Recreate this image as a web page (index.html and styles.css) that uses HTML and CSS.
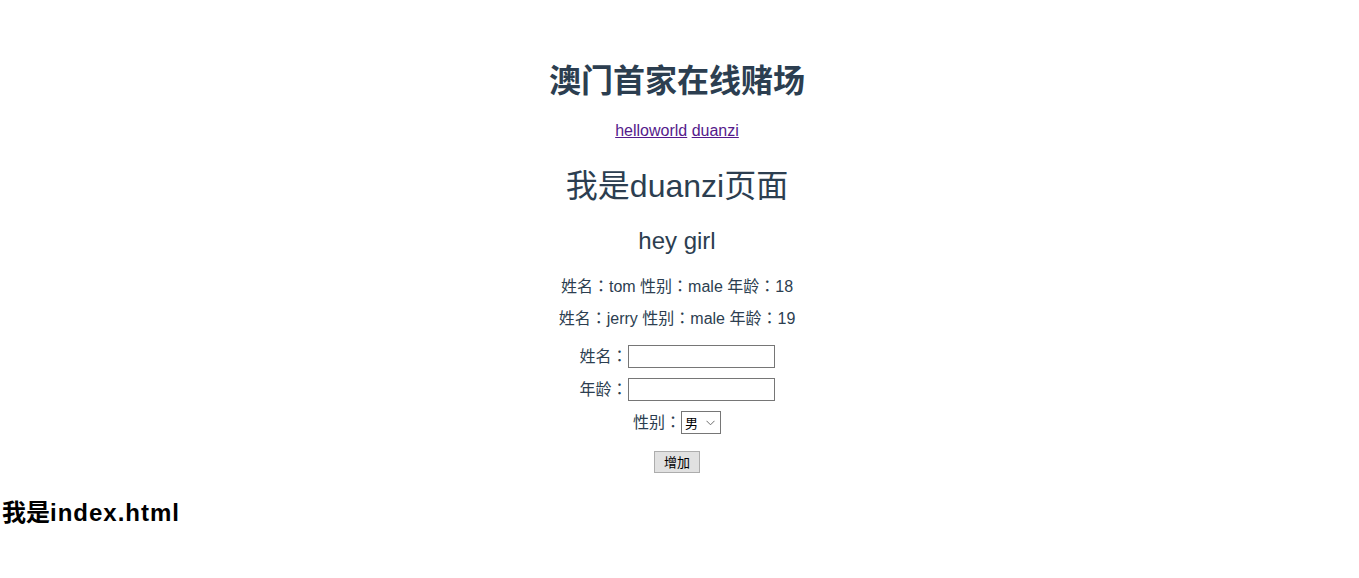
FILE: index.html
```html
<!DOCTYPE html>
<html lang="zh-CN">
<head>
<meta charset="utf-8">
<title>duanzi</title>
<link rel="stylesheet" href="styles.css">
</head>
<body>
<div class="app">
  <h1 class="title">澳门首家在线赌场</h1>
  <div class="nav"><a href="#">helloworld</a> <a href="#">duanzi</a></div>
  <div class="page">
    <h1 class="page-title">我是duanzi页面</h1>
    <h2 class="sub">hey girl</h2>
    <p class="row">姓名<span class="colon" lang="zh-Hant">：</span>tom 性别<span class="colon" lang="zh-Hant">：</span>male 年龄<span class="colon" lang="zh-Hant">：</span>18</p>
    <p class="row">姓名<span class="colon" lang="zh-Hant">：</span>jerry 性别<span class="colon" lang="zh-Hant">：</span>male 年龄<span class="colon" lang="zh-Hant">：</span>19</p>
    <div class="form">
      <div class="field"><label>姓名<span class="colon" lang="zh-Hant">：</span></label><input type="text" class="txt"></div>
      <div class="field"><label>年龄<span class="colon" lang="zh-Hant">：</span></label><input type="text" class="txt"></div>
      <div class="field"><label>性别<span class="colon" lang="zh-Hant">：</span></label><span class="sel-wrap"><select class="sel"><option>男</option><option>女</option></select><svg class="chev" width="9" height="6" viewBox="0 0 9 6"><path d="M0.5 0.8 L4.5 4.8 L8.5 0.8" fill="none" stroke="#6d6d6d" stroke-width="1"/></svg></span></div>
      <div class="field btn-row"><button class="btn">增加</button></div>
    </div>
  </div>
</div>
<h2 class="footer">我是<span class="latin">index.html</span></h2>
</body>
</html>
```
FILE: styles.css
```css
html, body {
  margin: 0;
  padding: 0;
  background: #fff;
}
body {
  font-family: "Liberation Sans", Arial, "Noto Sans CJK SC", sans-serif;
}
.app {
  margin-top: 60px;
  text-align: center;
  color: #2c3e50;
  padding-top: 1px;
  padding-right: 5px;
}
.colon {
  font-family: "Noto Sans CJK TC", sans-serif;
  line-height: 1;
  vertical-align: baseline;
}
.title {
  font-size: 32px;
  font-weight: bold;
  margin: 0;
  line-height: 37px;
  padding-top: 2px;
}
.nav {
  margin-top: 22px;
  font-size: 16px;
  line-height: 18px;
}
.nav a {
  color: #551a8b;
}
.page-title {
  font-size: 32px;
  font-weight: normal;
  margin: 28px 0 0;
  line-height: 37px;
}
.sub {
  font-size: 24px;
  font-weight: normal;
  margin: 22px 0 0;
  line-height: 28px;
}
.row {
  font-size: 16px;
  margin: 22px 0 0;
  line-height: 18px;
  height: 18px;
}
.row + .row {
  margin-top: 14px;
}
.form {
  margin-top: 18px;
  display: flex;
  flex-direction: column;
  align-items: center;
  gap: 10px;
}
.field {
  display: flex;
  align-items: center;
  font-size: 16px;
  line-height: 18px;
}
.txt {
  width: 147px;
  height: 23px;
  box-sizing: border-box;
  border: 1px solid #767676;
  padding: 1px 2px;
  margin: 0;
  font-size: 13px;
}
.sel-wrap {
  position: relative;
  display: inline-block;
  height: 23px;
}
.sel {
  -webkit-appearance: none;
  appearance: none;
  width: 40px;
  height: 23px;
  font-size: 13px;
  box-sizing: border-box;
  border: 1px solid #767676;
  border-radius: 0;
  background: #fff;
  color: #000;
  margin: 0;
  padding: 0 0 0 3px;
  font-family: "Noto Sans CJK SC", sans-serif;
}
.chev {
  position: absolute;
  right: 6px;
  top: 9px;
  pointer-events: none;
}
.btn-row {
  margin-top: 7px;
}
.btn {
  width: 46px;
  height: 22px;
  font-size: 13px;
  font-family: "Noto Sans CJK SC", sans-serif;
  color: #000;
  border: 1px solid #adadad;
  background: #e1e1e1;
  padding: 0;
  line-height: 18px;
}
.footer {
  font-size: 24px;
  font-weight: bold;
  color: #000;
  margin: 26px 0 0 2px;
  line-height: 28px;
}
.latin {
  letter-spacing: 1px;
}
```
